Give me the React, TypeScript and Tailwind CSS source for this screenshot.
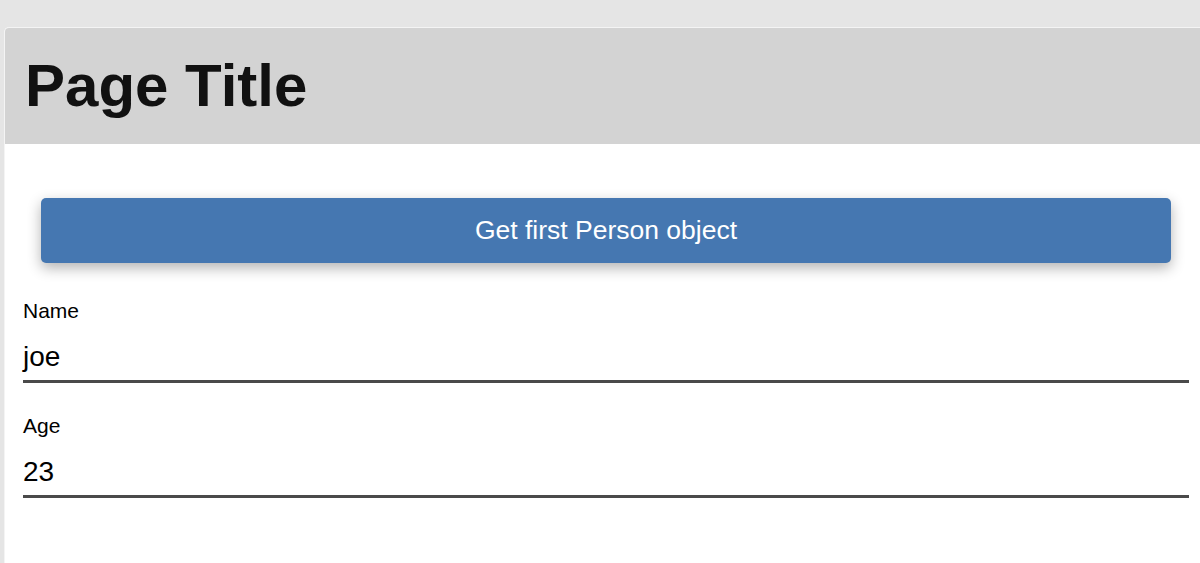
import React from "react";

export default function App() {
  const font = { fontFamily: '"Liberation Sans", Arial, Helvetica, sans-serif' };
  return (
    <div className="w-[1200px] h-[563px] bg-[#e5e5e5] pt-[27px] pl-[4px] overflow-hidden" style={font}>
      <div className="h-full bg-white border-l border-t border-[#f4f4f4] rounded-tl-[5px] overflow-hidden flex flex-col">
        <header className="h-[116px] bg-[#d3d3d3] pl-[20px] py-[28px]">
          <h1 className="text-[60px] leading-[60px] font-bold text-[#111]">Page Title</h1>
        </header>
        <main className="pl-[18px] pr-[11px]">
          <button className="mt-[54px] mx-[18px] w-[calc(100%-36px)] h-[65px] rounded-[5px] bg-[#4577b1] text-white text-[26.5px] leading-[65px] shadow-[0_5px_14px_rgba(0,0,0,0.3)]">
            Get first Person object
          </button>
          <div className="mt-[36px]">
            <div className="text-[21px] leading-[24px] text-black">Name</div>
            <div className="mt-[18px] pb-[7px] border-b-[3px] border-[#4a4a4a]">
              <div className="h-[32px] text-[28px] leading-[32px] text-black">joe</div>
            </div>
          </div>
          <div className="mt-[31px]">
            <div className="text-[21px] leading-[24px] text-black">Age</div>
            <div className="mt-[18px] pb-[7px] border-b-[3px] border-[#4a4a4a]">
              <div className="h-[32px] text-[28px] leading-[32px] text-black">23</div>
            </div>
          </div>
        </main>
      </div>
    </div>
  );
}
